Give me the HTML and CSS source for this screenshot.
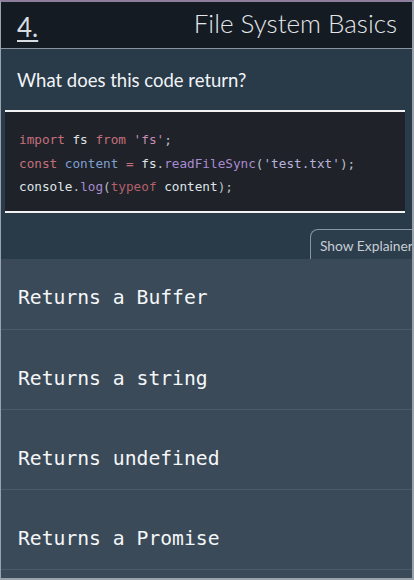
FILE: index.html
```html
<!DOCTYPE html>
<html>
<head>
<meta charset="utf-8">
<link rel="stylesheet" href="styles.css">
</head>
<body>
<div class="frame">
  <header class="header">
    <span class="num">4.</span>
    <h1 class="title">File System Basics</h1>
  </header>
  <section class="question">
    <p class="prompt">What does this code return?</p>
    <pre class="code"><code><span class="kw">import</span> fs <span class="kw">from</span> <span class="str">'fs'</span><span class="pn">;</span>
<span class="kw">const</span> <span class="var">content</span> <span class="kw">=</span> fs<span class="pn">.</span><span class="fn">readFileSync</span><span class="pn">(</span><span class="str2">'test.txt'</span><span class="pn">);</span>
console<span class="pn">.</span><span class="fn">log</span><span class="pn">(</span><span class="kw2">typeof</span> content<span class="pn">);</span></code></pre>
    <div class="tabrow">
      <button class="tab">Show Explainer</button>
    </div>
  </section>
  <ul class="options">
    <li class="option">Returns a Buffer</li>
    <li class="option">Returns a string</li>
    <li class="option">Returns undefined</li>
    <li class="option">Returns a Promise</li>
  </ul>
</div>
</body>
</html>
```

FILE: styles.css
```css
* { box-sizing: border-box; }
html, body { margin: 0; padding: 0; }
body {
  width: 414px;
  height: 580px;
  background: #9ea6b0;
  overflow: hidden;
  font-family: Lato, "Open Sans", sans-serif;
}
.frame {
  width: 414px;
  height: 580px;
  border-top: 2px solid #8d7e9e;
  border-left: 1px solid #9aa2ac;
  border-right: 2px solid #9aa2ac;
  border-bottom: 2px solid #9aa2ac;
  background: #3a4a59;
  display: flex;
  flex-direction: column;
  overflow: hidden;
}
.header {
  height: 47px;
  background: #141b22;
  border-bottom: 1px solid #8a949e;
  display: flex;
  align-items: flex-end;
  justify-content: space-between;
  padding: 0 15px 6px 16px;
  flex-shrink: 0;
}
.num {
  color: #d8dce0;
  font-size: 26px;
  font-weight: 400;
  line-height: 30px;
  text-decoration: underline;
  text-decoration-thickness: 2px;
  text-underline-offset: 3px;
}
.title {
  margin: 0 0 4px 0;
  color: #e4e6ea;
  font-size: 26px;
  font-weight: 300;
  line-height: 30px;
}
.question {
  background: #293a49;
  padding: 18px 0 0 0;
  flex-shrink: 0;
}
.prompt {
  margin: 0 0 0 16px;
  color: #f2f4f6;
  font-size: 18.5px;
  line-height: 26px;
}
.code {
  margin: 17px 7px 0 4px;
  background: #1f2329;
  border-top: 2px solid #f0f2f4;
  border-bottom: 2px solid #f0f2f4;
  padding: 16px 14px 12px 14px;
  font-family: "DejaVu Sans Mono", monospace;
  font-size: 12.7px;
  line-height: 23.5px;
  color: #dfe3e7;
}
.code code { font-family: inherit; }
.kw { color: #c56f7c; }
.kw2 { color: #b3606a; }
.str { color: #c88cb6; }
.str2 { color: #b7b2dc; }
.var { color: #7f9fd0; }
.fn { color: #a98ad0; }
.pn { color: #b9c0c8; }
.tabrow {
  display: flex;
  justify-content: flex-end;
  padding-top: 16px;
}
.tab {
  width: 106px;
  height: 30px;
  margin-right: -4px;
  background: #2c3d4c;
  border: 1px solid #8a96a2;
  border-bottom: none;
  border-radius: 8px 0 0 0;
  color: #c8ced4;
  font-family: Lato, sans-serif;
  font-size: 13.8px;
  text-align: left;
  padding: 2px 0 0 9px;
  white-space: nowrap;
}
.options {
  list-style: none;
  margin: 0;
  padding: 0;
  background: #3a4a59;
}
.option {
  height: 80px;
  padding: 18px 0 0 17px;
  display: flex;
  align-items: center;
  border-bottom: 1px solid #4b5b69;
  color: #f4f6f8;
  font-family: "DejaVu Sans Mono", monospace;
  font-size: 19.7px;
}
.option:first-child {
  height: 71px;
  padding-top: 8px;
}
```
